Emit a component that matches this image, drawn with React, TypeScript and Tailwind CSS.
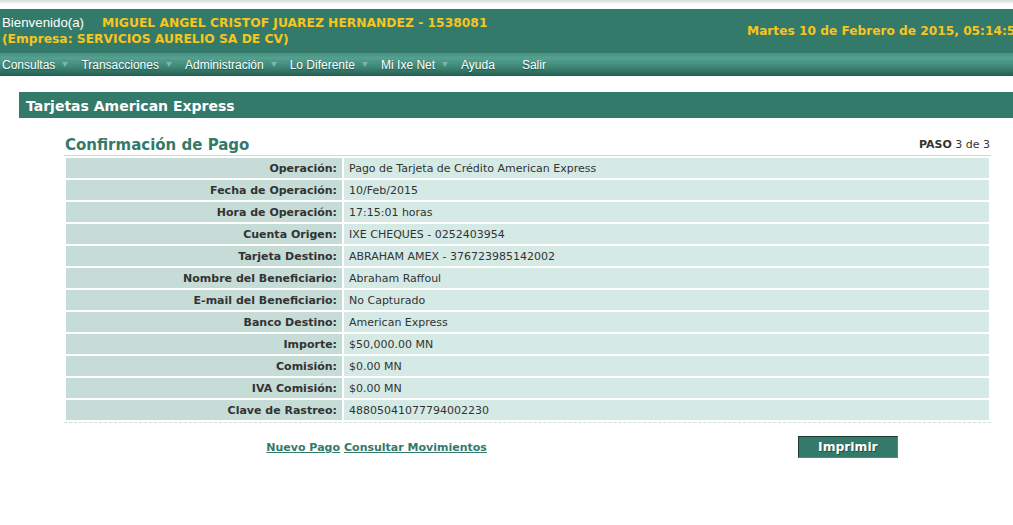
import React from "react";

const rows: [string, string][] = [
  ["Operación:", "Pago de Tarjeta de Crédito American Express"],
  ["Fecha de Operación:", "10/Feb/2015"],
  ["Hora de Operación:", "17:15:01 horas"],
  ["Cuenta Origen:", "IXE CHEQUES - 0252403954"],
  ["Tarjeta Destino:", "ABRAHAM AMEX - 376723985142002"],
  ["Nombre del Beneficiario:", "Abraham Raffoul"],
  ["E-mail del Beneficiario:", "No Capturado"],
  ["Banco Destino:", "American Express"],
  ["Importe:", "$50,000.00 MN"],
  ["Comisión:", "$0.00 MN"],
  ["IVA Comisión:", "$0.00 MN"],
  ["Clave de Rastreo:", "48805041077794002230"],
];

const menu: [string, boolean][] = [
  ["Consultas", true],
  ["Transacciones", true],
  ["Administración", true],
  ["Lo Diferente", true],
  ["Mi Ixe Net", true],
  ["Ayuda", false],
  ["Salir", false],
];

const App: React.FC = () => {
  return (
    <div className="w-full min-h-screen bg-white overflow-hidden font-['DejaVu_Sans',sans-serif] text-[11px] text-[#333]">
      <div className="h-[9px] bg-gradient-to-b from-[#d9d9d9] via-white to-white"></div>

      {/* header */}
      <header className="h-[44px] bg-[#347a6a] flex overflow-hidden">
        <div className="w-[747px] shrink-0 pl-[2px] pt-[6px] leading-[16px]">
          <div className="flex items-baseline">
            <span className="font-['Liberation_Sans',sans-serif] text-[13.3px] text-white">
              Bienvenido(a)
            </span>
            <span className="ml-[18px] text-[12.3px] font-bold text-[#f7c51d]">
              MIGUEL ANGEL CRISTOF JUAREZ HERNANDEZ - 1538081
            </span>
          </div>
          <div className="text-[12.3px] font-bold text-[#f7c51d]">
            (Empresa: SERVICIOS AURELIO SA DE CV)
          </div>
        </div>
        <div className="self-center whitespace-nowrap text-[12.2px] font-bold text-[#f7c51d] pt-[1px]">
          Martes 10 de Febrero de 2015, 05:14:53 p.m.
        </div>
      </header>

      {/* menu */}
      <nav className="h-[23px] flex items-center pl-[2px] bg-[linear-gradient(to_bottom,#4a9080_0%,#53a190_22%,#3f8777_60%,#215e50_100%)] font-['Liberation_Sans',sans-serif] text-[12px] text-white">
        {menu.map(([label, arrow]) => (
          <div key={label} className="flex items-center mr-[13px] [text-shadow:0_1px_1px_rgba(0,40,30,0.5)]">
            <span>{label}</span>
            <span
              className={
                arrow
                  ? "ml-[7px] w-0 h-0 border-l-[3.5px] border-r-[3.5px] border-t-[5px] border-l-transparent border-r-transparent border-t-[#7fb3a6]"
                  : "ml-[7px] w-[7px]"
              }
            ></span>
          </div>
        ))}
      </nav>

      {/* section bar */}
      <div className="mt-[16px] ml-[19px] h-[26px] bg-[#347a6a] pl-[7px] leading-[28px] text-[14px] font-bold text-white">
        Tarjetas American Express
      </div>

      <main className="ml-[64px] w-[927px]">
        <div className="mt-[17px] h-[21px] flex items-center justify-between border-b border-[#c5dcd7]">
          <h1 className="pl-[1px] text-[15px] font-bold text-[#347a6a]">
            Confirmación de Pago
          </h1>
          <div className="pr-[1px]">
            <span className="font-bold">PASO</span> 3 de 3
          </div>
        </div>

        <div className="grid grid-cols-[276px_1fr] gap-[2px] p-[2px] border-b border-dashed border-[#c9e3dc]">
          {rows.map(([label, value]) => (
            <React.Fragment key={label}>
              <div className="h-[20px] leading-[22px] bg-[#c5dcd7] text-right pr-[5px] font-bold">
                {label}
              </div>
              <div className="h-[20px] leading-[22px] bg-[#d5e9e5] pl-[5px]">
                {value}
              </div>
            </React.Fragment>
          ))}
        </div>

        <div className="mt-[13px] grid grid-cols-[276px_1fr] gap-[2px] px-[2px] items-center">
          <div className="text-right pr-[2px] pt-[2px]">
            <a className="font-bold text-[#347a6a] underline">Nuevo Pago</a>
          </div>
          <div className="flex items-center">
            <a className="font-bold text-[#347a6a] underline pt-[2px]">Consultar Movimientos</a>
            <button className="ml-[311px] w-[100px] h-[22px] bg-[#347a6a] border border-[#1b3b34] border-r-[#4d8a7c] border-b-[#4d8a7c] text-[12.3px] font-bold text-white [text-shadow:1px_1px_0_rgba(0,0,0,0.35)]">
              Imprimir
            </button>
          </div>
        </div>
      </main>
    </div>
  );
};

export default App;
